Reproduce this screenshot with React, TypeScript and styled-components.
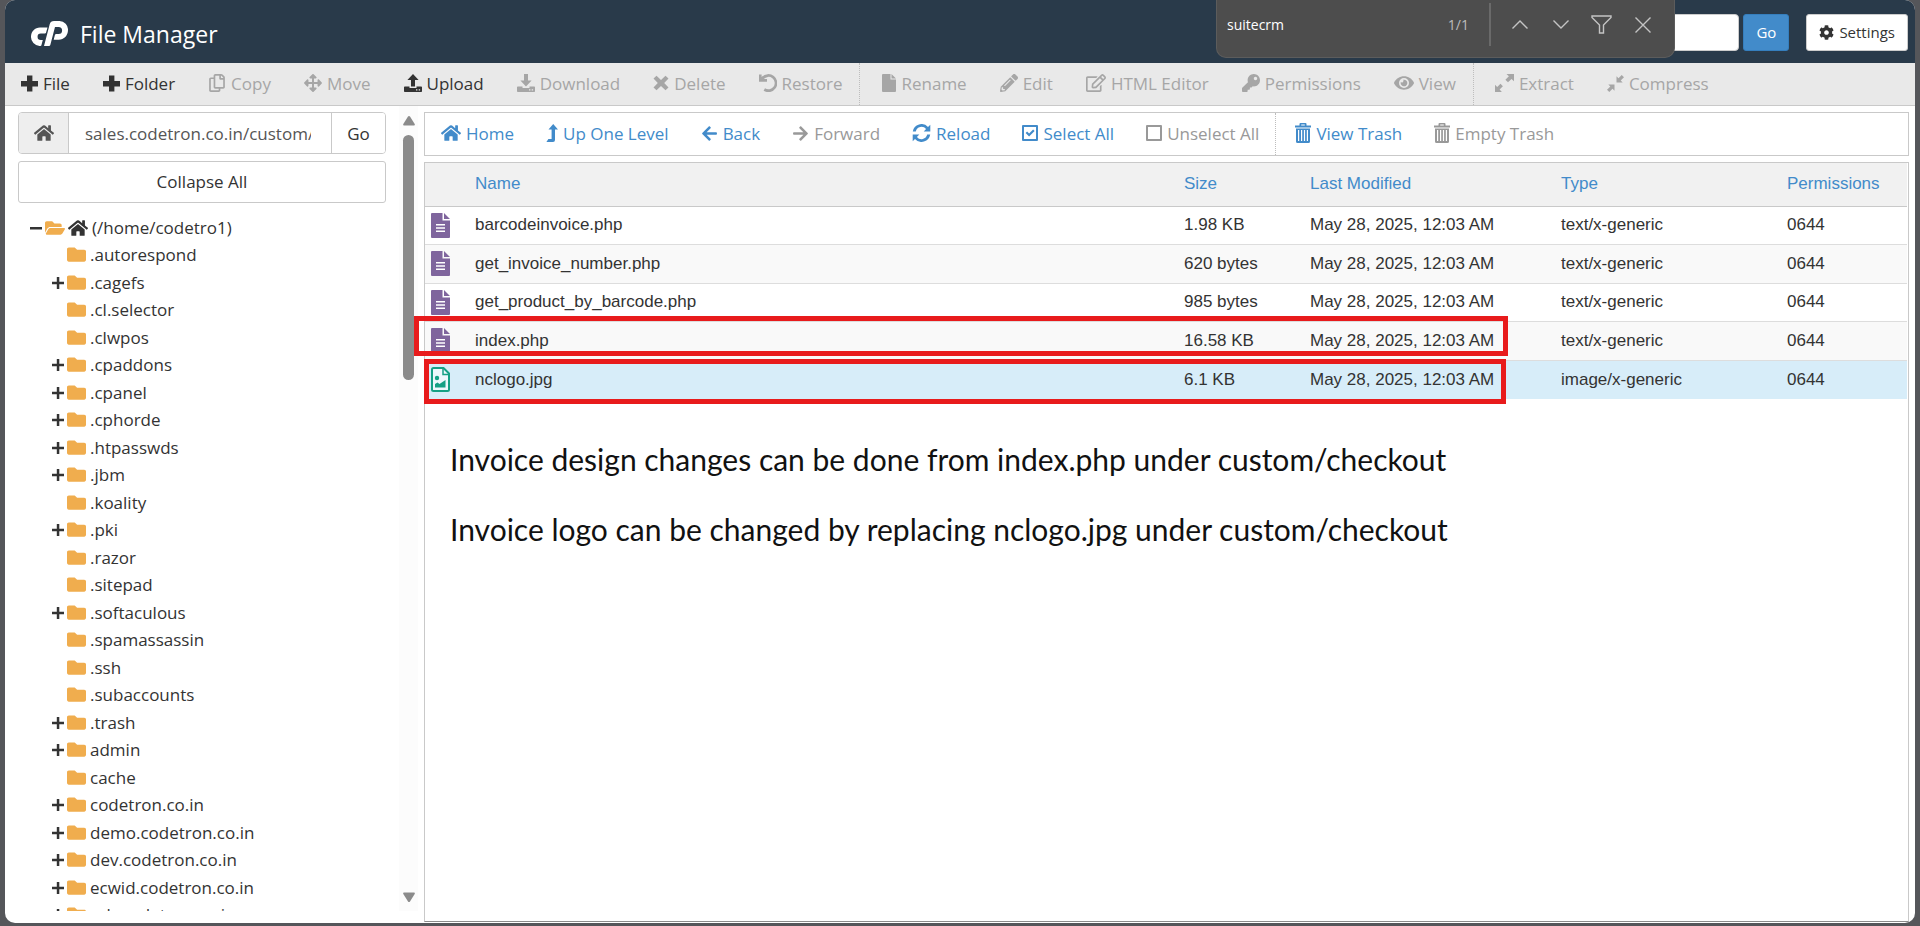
import React from "react";
import styled, { createGlobalStyle, css } from "styled-components";
import {
  FaArrowLeft,
  FaArrowRight,
  FaArrowsAlt,
  FaCog,
  FaEye,
  FaFolder,
  FaFolderOpen,
  FaHome,
  FaKey,
  FaPencilAlt,
  FaRegCopy,
  FaRegEdit,
} from "react-icons/fa";

const color = {
  frame: "#55565a",
  header: "#293a4a",
  bar: "#e9e9e9",
  line: "#c9c9c9",
  text: "#333333",
  link: "#428bca",
  muted: "#a6a6a6",
  mutedDark: "#999999",
  folder: "#f0ad4e",
  marker: "#e81b1c",
};

const uiFont = `"Open Sans", "Noto Sans", sans-serif`;
const tableFont = `"Liberation Sans", Arial, sans-serif`;

const GlobalStyle = createGlobalStyle`
  * { box-sizing: border-box; }
  body {
    margin: 0;
    background: ${color.frame};
    color: ${color.text};
    font-family: ${uiFont};
    font-size: 17px;
  }
  button, input { font: inherit; color: inherit; margin: 0; }
  button { cursor: pointer; }
  button:disabled { cursor: default; }
  svg { display: block; flex: none; }
`;

/* ---------- icons ---------- */

const Svg = styled.svg.attrs({ fill: "currentColor", "aria-hidden": true })``;

const PlusIcon = () => (
  <Svg width="17" height="17" viewBox="0 0 17 17">
    <path d="M6 0.5h5.400v5.500H17v5.400h-5.600V16.500H6v-5.100H0V6h6z" />
  </Svg>
);

const TransferIcon = ({ up }: { up?: boolean }) => (
  <Svg width="18" height="18" viewBox="0 0 18 18">
    {up ? (
      <path d="M9 0l5.600 6H11v6.500H7V6H3.400z" />
    ) : (
      <path d="M7 0h4v6.500h3.600L9 12.500 3.400 6.500H7z" />
    )}
    <path
      fillRule="evenodd"
      d="M0.800 12.500H5.500V14h7v-1.500h4.700q.8 0 .8.8v3.900q0 .8-.8.8H.8q-.8 0-.8-.8v-3.900q0-.8.8-.8zM12 15.200v1.200h1.400v-1.200zM14.700 15.200v1.200h1.400v-1.200z"
    />
  </Svg>
);

const CrossIcon = () => (
  <Svg width="16" height="16" viewBox="0 0 16 16">
    <path d="M3.500 0.700L8 5l4.500-4.300L15.500 3.600 11.200 8l4.300 4.400-3 2.900L8 11l-4.500 4.300L.5 12.400 4.800 8 .5 3.600z" />
  </Svg>
);

const RestoreIcon = () => (
  <Svg width="18" height="18" viewBox="0 0 18 18">
    <path d="M0 0.500h2.600v2.600A9 9 0 1 1 4.600 16.800l1.400-2.600A6.200 6.200 0 1 0 4.800 5H8v2.700H0z" />
  </Svg>
);

const FileIcon = () => (
  <Svg width="14" height="18" viewBox="0 0 14 18">
    <path d="M1 0h7.500v5.500H14V17q0 1-1 1H1q-1 0-1-1V1q0-1 1-1zM9.500 0L14 4.500H9.500z" />
  </Svg>
);

const LevelUpIcon = () => (
  <Svg width="12" height="18" viewBox="0 0 12 18">
    <path d="M7.200 0L12 5.600H9V16q0 2-2 2H.4L2.400 15H5.600V5.600H2.500z" />
  </Svg>
);

const ExtractIcon = () => (
  <Svg width="19" height="18" viewBox="0 0 19 18">
    <path d="M11.500 0H19v7.200l-2.500-2.300-3.500 3.300-2.600-2.500L13.900 2.300z" />
    <path d="M0 10.800l2.200 2.200 3.300-3.200 2.400 2.400-3.300 3.300L6.900 18H0z" />
  </Svg>
);

const CompressIcon = () => (
  <Svg width="17" height="17" viewBox="0 0 17 17">
    <path d="M14.700 0L17 2.200l-3.300 3.200 2 2H9.500V1.200l2 2z" />
    <path d="M2.300 17L0 14.800l3.300-3.200-2-2h6.200v6.200l-2-2z" />
  </Svg>
);

const ReloadIcon = () => (
  <Svg width="19" height="18" viewBox="0 0 19 18">
    <path d="M0.800 7.400A8.700 8.700 0 0 1 16 3.100L18.300 0.800V7.400h-6.600l2.400-2.400A5.900 5.900 0 0 0 3.800 7.400z" />
    <path d="M18.200 10.600A8.700 8.700 0 0 1 3 14.900L0.700 17.200V10.600h6.600l-2.400 2.400a5.900 5.900 0 0 0 10.300-2.400z" />
  </Svg>
);

const BoxIcon = ({ checked }: { checked?: boolean }) => (
  <Svg width="16" height="16" viewBox="0 0 16 16">
    <path
      fillRule="evenodd"
      d="M1 0h14q1 0 1 1v14q0 1-1 1H1q-1 0-1-1V1q0-1 1-1zM2 2v12h12V2z"
    />
    {checked && <path d="M3.600 8.100l1.500-1.500 2 2 4-4.100 1.500 1.500-5.500 5.600z" />}
  </Svg>
);

const TrashIcon = () => (
  <Svg width="16" height="20" viewBox="0 0 16 20">
    <path
      fillRule="evenodd"
      d="M4.500 2.500V1q0-1 1-1h5q1 0 1 1v1.500H16v2H0v-2zM6.200 1.500v1h3.600v-1z"
    />
    <path
      fillRule="evenodd"
      d="M1 5.500h14V18.500q0 1.500-1.500 1.500h-11Q1 20 1 18.500zM3 7v11h1.200V7zM6 7v11h1.200V7zM8.900 7v11h1.200V7zM11.800 7v11H13V7z"
    />
  </Svg>
);

const TreeSign = ({ open }: { open?: boolean }) => (
  <Svg width="12" height="12" viewBox="0 0 12 12">
    <path d={open ? "M0 5h12v2.500H0z" : "M4.800 0h2.500v4.800H12v2.500H7.300V12H4.800V7.300H0V4.800h4.800z"} />
  </Svg>
);

const DocIcon = () => (
  <Svg width="19" height="25" viewBox="0 0 19 25">
    <path fill="#7f659d" d="M1 0h10.500v7.500H19V24q0 1-1 1H1q-1 0-1-1V1q0-1 1-1zM13 0l6 6h-6z" />
    <path fill="#ffffff" d="M5 11h9v1.500H5zM5 14.200h9v1.500H5zM5 17.400h9v1.500H5z" />
  </Svg>
);

const PictureIcon = () => (
  <Svg width="19" height="25" viewBox="0 0 19 25">
    <path
      d="M2.500 1h10L18 6.500v16q0 1.500-1.500 1.500h-14Q1 24 1 22.500v-20Q1 1 2.500 1z"
      fill="#eef7fc"
      stroke="#16a085"
      strokeWidth="2"
    />
    <path d="M12 1v6.500h6" fill="none" stroke="#16a085" strokeWidth="1.500" />
    <circle cx="6" cy="11" r="2.200" fill="#16a085" />
    <path d="M4 20.500v-3.500l2.500-1.500 2 1.500 6-4v7.500z" fill="#16a085" />
  </Svg>
);

const LogoIcon = () => (
  <Svg width="37" height="26" viewBox="0 0 37 26">
    <path d="M16.500 6.500L15 11.800q-.3.700-1 .7H9.800a3.200 3.200 0 0 0 0 6.500h2l-1.400 5.300q-.2.700-1 .7H8.500A9 9 0 0 1 0 15.800C0 10.500 4 6.500 9 6.500z" />
    <path d="M13 25L18.700 3.300Q19.600 0 23 0h5.500A8.600 8.600 0 0 1 37 9c0 5.400-4 9.800-9.300 9.800h-5l1.200-4.700q.3-1 1.300-1H27.500a3.600 3.600 0 0 0 0-7.200H24L19.300 24q-.3 1-1.300 1z" />
  </Svg>
);

/* ---------- page shell ---------- */

const Page = styled.div`
  position: relative;
  height: 100vh;
  min-height: 600px;
  padding: 0 5px 3px;
`;

const Window = styled.div`
  display: flex;
  flex-direction: column;
  height: 100%;
  overflow: hidden;
  border-radius: 10px;
  background: #ffffff;
`;

const Header = styled.header`
  display: flex;
  align-items: center;
  flex: none;
  height: 63px;
  padding: 0 7px 0 26px;
  background: ${color.header};
  color: #ffffff;
`;

const Brand = styled.h1`
  display: flex;
  align-items: center;
  gap: 12px;
  margin: 0;
  padding-top: 4px;
  font-size: 23px;
  line-height: 32px;
  font-weight: 400;
`;

const Search = styled.form`
  display: flex;
  gap: 4px;
  margin: 2px 17px 0 auto;
  font-size: 15px;
`;

const SearchInput = styled.input`
  width: 280px;
  height: 37px;
  padding: 0 12px;
  border: 1px solid #cccccc;
  border-radius: 4px;
  background: #ffffff;
  color: ${color.text};
`;

const HeaderButton = styled.button<{ $primary?: boolean }>`
  display: flex;
  align-items: center;
  justify-content: center;
  gap: 5px;
  height: 37px;
  padding: 0 12px 1px;
  border: 1px solid ${(p) => (p.$primary ? "#357ebd" : "#cccccc")};
  border-radius: 3px;
  background: ${(p) => (p.$primary ? color.link : "#ffffff")};
  color: ${(p) => (p.$primary ? "#ffffff" : color.text)};
  font-size: 15px;
`;

const SettingsSlot = styled.div`
  margin-top: 2px;
`;

const FindBar = styled.div`
  position: absolute;
  top: 0;
  right: 245px;
  display: flex;
  align-items: center;
  width: 459px;
  height: 58px;
  padding: 0 21px 8px 10px;
  border: 1px solid #5c5c5c;
  border-top: 0;
  border-radius: 0 0 10px 10px;
  background: #4d4d4d;
  color: #ffffff;
  font-size: 14px;
`;

const FindInput = styled.input`
  flex: 1;
  min-width: 0;
  padding: 0;
  border: 0;
  outline: 0;
  background: transparent;
`;

const FindCount = styled.span`
  padding-right: 20px;
  color: #bdbdbd;
`;

const FindActions = styled.div`
  display: flex;
  align-items: center;
  gap: 20px;
  height: 43px;
  padding-left: 18px;
  border-left: 2px solid #6a6a6a;
`;

const FindButton = styled.button`
  display: flex;
  justify-content: center;
  width: 21px;
  padding: 0;
  border: 0;
  background: transparent;
  color: #c4c4c4;
`;

const Toolbar = styled.div<{ $boxed?: boolean }>`
  display: flex;
  flex: none;
  height: 43px;
  background: ${color.bar};
  border-bottom: 1px solid ${color.line};
  ${(p) =>
    p.$boxed &&
    css`
      height: 44px;
      border: 1px solid ${color.line};
      background: #ffffff;
    `}
`;

const ToolGroup = styled.div<{ $indent?: number }>`
  display: flex;
  padding-left: ${(p) => p.$indent ?? 0}px;

  & + & {
    border-left: 1px dotted #bdbdbd;
  }
`;

const ToolButton = styled.button<{ $link?: boolean }>`
  display: flex;
  align-items: center;
  gap: 5px;
  padding: 0 ${(p) => (p.$link ? 16 : 17)}px 2px 16px;
  border: 0;
  background: transparent;
  color: ${(p) => (p.$link ? color.link : color.text)};
  white-space: nowrap;

  &:disabled {
    color: ${(p) => (p.$link ? color.mutedDark : color.muted)};
  }
`;

const Body = styled.div`
  display: flex;
  flex: 1;
  min-height: 0;
`;

/* ---------- sidebar ---------- */

const Sidebar = styled.aside`
  display: flex;
  flex: none;
  width: 413px;
  margin-bottom: 12px;
`;

const SidebarContent = styled.div`
  flex: 1;
  min-width: 0;
  overflow: hidden;
  padding: 6px 13px 0;
`;

const PathForm = styled.form`
  display: flex;
  height: 42px;
  margin-bottom: 7px;
  border: 1px solid ${color.line};
  border-radius: 4px;
  overflow: hidden;
`;

const PathHome = styled.button`
  width: 50px;
  padding: 0 15px;
  border: 0;
  border-right: 1px solid ${color.line};
  background: #eeeeee;
  color: #555555;
`;

const PathInput = styled.input`
  flex: 1;
  min-width: 0;
  padding: 0 20px 0 16px;
  border: 0;
  background: transparent;
  color: #555555;
`;

const PathGo = styled.button`
  width: 54px;
  padding: 0;
  border: 0;
  border-left: 1px solid ${color.line};
  background: #ffffff;
`;

const CollapseButton = styled.button`
  width: 100%;
  height: 42px;
  padding: 0 0 2px;
  border: 1px solid ${color.line};
  border-radius: 3px;
  background: #ffffff;
`;

const Tree = styled.ul`
  margin: 0;
  padding: 0;
  list-style: none;
`;

const TreeRoot = styled(Tree)`
  padding: 11px 0 0 12px;
`;

const Branch = styled(Tree)`
  padding-left: 22px;

  > li:nth-child(odd) {
    height: 28px;
  }
  > li:nth-child(even) {
    height: 27px;
  }
`;

const Node = styled.button`
  display: flex;
  align-items: center;
  height: 27px;
  padding: 0;
  border: 0;
  background: transparent;
  white-space: nowrap;
`;

const Sign = styled.span`
  width: 15px;
`;

const FolderMark = styled.span`
  width: 23px;
  color: ${color.folder};
`;

const HomeMark = styled.span`
  width: 24px;
`;

const ScrollTrack = styled.div`
  display: flex;
  flex-direction: column;
  align-items: center;
  flex: none;
  width: 19px;
  padding: 10px 0 9px;
  background: #fcfcfc;
  color: #8b8b8b;
`;

const ScrollThumb = styled.div`
  width: 11px;
  height: 245px;
  margin: 9px 0 auto;
  border-radius: 6px;
  background: #8b8b8b;
`;

/* ---------- file list ---------- */

const Main = styled.main`
  display: flex;
  flex-direction: column;
  flex: 1;
  min-width: 0;
  gap: 6px;
  margin-left: -13px;
  padding: 6px 6px 1px 19px;
`;

const ListPanel = styled.section`
  position: relative;
  flex: 1;
  min-height: 0;
  padding-right: 1px;
  border: 1px solid ${color.line};
  border-bottom-color: #8a8a8a;
`;

const Table = styled.table`
  width: 100%;
  border-collapse: separate;
  border-spacing: 0;
  table-layout: fixed;
  font-family: ${tableFont};
`;

const HeadCell = styled.th`
  height: 44px;
  padding: 0 0 2px;
  border-bottom: 1px solid ${color.line};
  background: #f1f1f1;
  text-align: left;
  font-weight: 400;
`;

const SortButton = styled.button`
  padding: 0;
  border: 0;
  background: transparent;
  color: ${color.link};
`;

const FileRow = styled.tr<{ $selected?: boolean }>`
  height: 38px;

  td {
    padding: 0 0 1px;
    border-bottom: 1px solid #dddddd;
    white-space: nowrap;
  }
  &:nth-child(even) {
    height: 39px;
  }
  &:nth-child(even) td {
    background: #f9f9f9;
  }
  ${(p) =>
    p.$selected &&
    css`
      && td {
        background: #d7edf9;
        border-bottom: 0;
      }
    `}
`;

const IconCell = styled.td`
  && {
    padding-left: 6px;
  }
`;

const Marker = styled.div<{ $top: number; $left: number; $right: number; $height: number }>`
  position: absolute;
  top: ${(p) => p.$top}px;
  left: ${(p) => p.$left}px;
  right: ${(p) => p.$right}px;
  height: ${(p) => p.$height}px;
  border: 5px solid ${color.marker};
  pointer-events: none;
`;

const Notes = styled.div`
  padding: 40px 0 0 25px;
  color: #111111;
  font-family: Lato, Carlito, Calibri, sans-serif;
  font-size: 30px;
  line-height: 40px;

  p {
    margin: 0 0 30px;
    white-space: nowrap;
  }
`;

/* ---------- data ---------- */

type Tool = { label: string; icon: React.ReactNode; off?: boolean };

const fileTools: Tool[][] = [
  [
    { label: "File", icon: <PlusIcon /> },
    { label: "Folder", icon: <PlusIcon /> },
    { label: "Copy", icon: <FaRegCopy size={18} />, off: true },
    { label: "Move", icon: <FaArrowsAlt size={18} />, off: true },
    { label: "Upload", icon: <TransferIcon up /> },
    { label: "Download", icon: <TransferIcon />, off: true },
    { label: "Delete", icon: <CrossIcon />, off: true },
    { label: "Restore", icon: <RestoreIcon />, off: true },
  ],
  [
    { label: "Rename", icon: <FileIcon />, off: true },
    { label: "Edit", icon: <FaPencilAlt size={18} />, off: true },
    { label: "HTML Editor", icon: <FaRegEdit size={20} />, off: true },
    { label: "Permissions", icon: <FaKey size={18} />, off: true },
    { label: "View", icon: <FaEye size={20} />, off: true },
  ],
  [
    { label: "Extract", icon: <ExtractIcon />, off: true },
    { label: "Compress", icon: <CompressIcon />, off: true },
  ],
];

const listTools: Tool[][] = [
  [
    { label: "Home", icon: <FaHome size={20} /> },
    { label: "Up One Level", icon: <LevelUpIcon /> },
    { label: "Back", icon: <FaArrowLeft size={17} /> },
    { label: "Forward", icon: <FaArrowRight size={17} />, off: true },
    { label: "Reload", icon: <ReloadIcon /> },
    { label: "Select All", icon: <BoxIcon checked /> },
    { label: "Unselect All", icon: <BoxIcon />, off: true },
  ],
  [
    { label: "View Trash", icon: <TrashIcon /> },
    { label: "Empty Trash", icon: <TrashIcon />, off: true },
  ],
];

const folders: [string, boolean][] = [
  [".autorespond", false],
  [".cagefs", true],
  [".cl.selector", false],
  [".clwpos", false],
  [".cpaddons", true],
  [".cpanel", true],
  [".cphorde", true],
  [".htpasswds", true],
  [".jbm", true],
  [".koality", false],
  [".pki", true],
  [".razor", false],
  [".sitepad", false],
  [".softaculous", true],
  [".spamassassin", false],
  [".ssh", false],
  [".subaccounts", false],
  [".trash", true],
  ["admin", true],
  ["cache", false],
  ["codetron.co.in", true],
  ["demo.codetron.co.in", true],
  ["dev.codetron.co.in", true],
  ["ecwid.codetron.co.in", true],
  ["erb.codetron.co.in", true],
];

const modified = "May 28, 2025, 12:03 AM";

const files = [
  { name: "barcodeinvoice.php", size: "1.98 KB", type: "text/x-generic" },
  { name: "get_invoice_number.php", size: "620 bytes", type: "text/x-generic" },
  { name: "get_product_by_barcode.php", size: "985 bytes", type: "text/x-generic" },
  { name: "index.php", size: "16.58 KB", type: "text/x-generic" },
  { name: "nclogo.jpg", size: "6.1 KB", type: "image/x-generic", picture: true },
];

const Tools = ({
  groups,
  indents,
  link,
}: {
  groups: Tool[][];
  indents: number[];
  link?: boolean;
}) => (
  <>
    {groups.map((group, i) => (
      <ToolGroup key={i} $indent={indents[i]}>
        {group.map((t) => (
          <ToolButton key={t.label} type="button" disabled={t.off} $link={link}>
            {t.icon}
            {t.label}
          </ToolButton>
        ))}
      </ToolGroup>
    ))}
  </>
);

const Line = ({ d, w, h }: { d: string; w: number; h: number }) => (
  <svg width={w} height={h} viewBox={`0 0 ${w} ${h}`} fill="none" stroke="currentColor" strokeWidth="1.4" aria-hidden>
    <path d={d} />
  </svg>
);

export default function App() {
  const stay = (e: React.FormEvent) => e.preventDefault();
  return (
    <Page>
      <GlobalStyle />
      <Window>
        <Header>
          <Brand>
            <LogoIcon />
            File Manager
          </Brand>
          <Search onSubmit={stay}>
            <SearchInput aria-label="Search" />
            <HeaderButton $primary>Go</HeaderButton>
          </Search>
          <SettingsSlot>
            <HeaderButton type="button">
              <FaCog size={15} />
              Settings
            </HeaderButton>
          </SettingsSlot>
        </Header>

        <Toolbar role="toolbar" aria-label="File actions">
          <Tools groups={fileTools} indents={[0, 6, 5]} />
        </Toolbar>

        <Body>
          <Sidebar>
            <SidebarContent>
              <PathForm onSubmit={stay}>
                <PathHome type="button" aria-label="Home directory">
                  <FaHome size={20} />
                </PathHome>
                <PathInput aria-label="Path" defaultValue="sales.codetron.co.in/custom/checkout" />
                <PathGo>Go</PathGo>
              </PathForm>
              <CollapseButton type="button">Collapse All</CollapseButton>
              <TreeRoot>
                <li>
                  <Node type="button">
                    <Sign>
                      <TreeSign open />
                    </Sign>
                    <FolderMark>
                      <FaFolderOpen size={20} />
                    </FolderMark>
                    <HomeMark>
                      <FaHome size={20} />
                    </HomeMark>
                    (/home/codetro1)
                  </Node>
                  <Branch>
                    {folders.map(([name, expandable]) => (
                      <li key={name}>
                        <Node type="button">
                          <Sign>{expandable && <TreeSign />}</Sign>
                          <FolderMark>
                            <FaFolder size={19} />
                          </FolderMark>
                          {name}
                        </Node>
                      </li>
                    ))}
                  </Branch>
                </li>
              </TreeRoot>
            </SidebarContent>
            <ScrollTrack>
              <Svg width="12" height="10" viewBox="0 0 12 10">
                <path d="M6 0q.6 0 1 .6l4.700 7.400q.6 1.500-.7 1.500H1Q-.3 9.500.3 8L5 .6Q5.400 0 6 0z" />
              </Svg>
              <ScrollThumb />
              <Svg width="12" height="10" viewBox="0 0 12 10">
                <path d="M6 10q-.6 0-1-.6L.3 2Q-.3.5 1 .5h10q1.300 0 .7 1.500L7 9.400q-.4.6-1 .6z" />
              </Svg>
            </ScrollTrack>
          </Sidebar>

          <Main>
            <Toolbar $boxed role="toolbar" aria-label="Navigation">
              <Tools groups={listTools} indents={[0, 3]} link />
            </Toolbar>
            <ListPanel>
              <Table>
                <colgroup>
                  <col width="50" />
                  <col />
                  <col width="126" />
                  <col width="251" />
                  <col width="226" />
                  <col width="120" />
                </colgroup>
                <thead>
                  <tr>
                    <HeadCell aria-label="Icon" />
                    {["Name", "Size", "Last Modified", "Type", "Permissions"].map((h) => (
                      <HeadCell key={h} scope="col">
                        <SortButton type="button">{h}</SortButton>
                      </HeadCell>
                    ))}
                  </tr>
                </thead>
                <tbody>
                  {files.map((f) => (
                    <FileRow key={f.name} $selected={f.picture}>
                      <IconCell>{f.picture ? <PictureIcon /> : <DocIcon />}</IconCell>
                      <td>{f.name}</td>
                      <td>{f.size}</td>
                      <td>{modified}</td>
                      <td>{f.type}</td>
                      <td>0644</td>
                    </FileRow>
                  ))}
                </tbody>
              </Table>
              <Marker $top={153} $left={-11} $right={400} $height={40} />
              <Marker $top={196} $left={-1} $right={402} $height={45} />
              <Notes>
                <p>Invoice design changes can be done from index.php under custom/checkout</p>
                <p>Invoice logo can be changed by replacing nclogo.jpg under custom/checkout</p>
              </Notes>
            </ListPanel>
          </Main>
        </Body>
      </Window>

      <FindBar role="search">
        <FindInput aria-label="Find on page" defaultValue="suitecrm" />
        <FindCount>1/1</FindCount>
        <FindActions>
          <FindButton type="button" aria-label="Previous">
            <Line w={16} h={9} d="M0.500 8.500L8 1l7.500 7.500" />
          </FindButton>
          <FindButton type="button" aria-label="Next">
            <Line w={16} h={9} d="M0.500 0.500L8 8l7.500-7.500" />
          </FindButton>
          <FindButton type="button" aria-label="Filter">
            <Line w={21} h={19} d="M1 1h19v1.500L12.500 10v8h-4v-8L1 2.500z" />
          </FindButton>
          <FindButton type="button" aria-label="Close">
            <Line w={16} h={16} d="M0.500 0.500l15 15M15.500 0.500l-15 15" />
          </FindButton>
        </FindActions>
      </FindBar>
    </Page>
  );
}
